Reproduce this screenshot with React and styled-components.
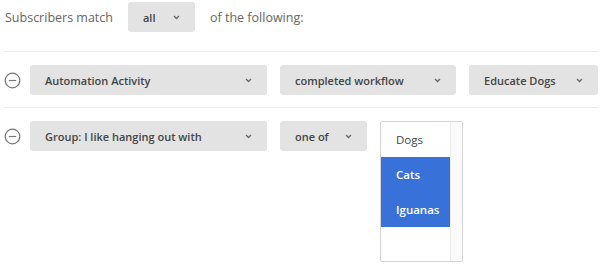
import styled, { createGlobalStyle } from 'styled-components';

const GlobalStyle = createGlobalStyle`
    body {
        margin: 0;
        background: #fff;
        font-family: "Open Sans", "Liberation Sans", sans-serif;
    }
`;

const Page = styled.div`
    width: 600px;
    height: 264px;
    overflow: hidden;
    padding: 2px 2px 0 4px;
    box-sizing: border-box;
`;

const MatchLine = styled.div`
    display: flex;
    align-items: center;
    gap: 15px;
    height: 30px;
    font-size: 12.5px;
    color: #666;
    padding-left: 1px;
    padding-bottom: 19px;
    border-bottom: 1px solid #ececec;
`;

const Select = styled.div`
    display: flex;
    align-items: center;
    justify-content: space-between;
    box-sizing: border-box;
    width: ${props => props.width}px;
    height: 30px;
    padding: 0 15px 0 15px;
    background: #e3e3e3;
    border-radius: 3px;
    font-size: 11px;
    font-weight: 600;
    color: #444;
    flex-shrink: 0;
`;

const Chevron = () => (
    <svg width="7" height="5" viewBox="0 0 7 5">
        <path d="M1 1 L3.5 3.5 L6 1" fill="none" stroke="#666" strokeWidth="1.3" />
    </svg>
);

const RuleRow = styled.div`
    display: flex;
    align-items: flex-start;
    gap: 13px;
    padding: 13px 0 12px;
    border-bottom: ${props => (props.last ? 'none' : '1px solid #ececec')};
    height: 30px;
`;

const RemoveIcon = styled.div`
    width: 17px;
    height: 30px;
    display: flex;
    align-items: center;
    margin-right: -4px;
`;

const ListBox = styled.div`
    display: flex;
    width: 83px;
    height: 141px;
    box-sizing: border-box;
    border: 1px solid #d4d4d4;
    border-radius: 2px;
    background: #fff;
    flex-shrink: 0;
`;

const Options = styled.div`
    flex: 1;
`;

const Option = styled.div`
    height: 35px;
    display: flex;
    align-items: center;
    padding-left: 15px;
    font-size: 11.5px;
    font-weight: ${props => (props.selected ? 600 : 400)};
    color: ${props => (props.selected ? '#fff' : '#444')};
    background: ${props => (props.selected ? '#3872d8' : 'transparent')};
`;

const Scrollbar = styled.div`
    width: 11px;
    border-left: 1px solid #ececec;
    background: #fafafa;
`;

const MinusCircle = () => (
    <svg width="17" height="17" viewBox="0 0 17 17">
        <circle cx="8.5" cy="8.5" r="7.3" fill="none" stroke="#777" strokeWidth="1.2" />
        <line x1="4.8" y1="8.5" x2="12.2" y2="8.5" stroke="#777" strokeWidth="1.2" />
    </svg>
);

const Dropdown = ({ width, label }) => (
    <Select width={width}>
        <span>{label}</span>
        <Chevron />
    </Select>
);

export default function App() {
    return (
        <Page>
            <GlobalStyle />
            <MatchLine>
                <span>Subscribers match</span>
                <Dropdown width={67} label="all" />
                <span>of the following:</span>
            </MatchLine>
            <RuleRow>
                <RemoveIcon><MinusCircle /></RemoveIcon>
                <Dropdown width={237} label="Automation Activity" />
                <Dropdown width={176} label="completed workflow" />
                <Dropdown width={129} label="Educate Dogs" />
            </RuleRow>
            <RuleRow last>
                <RemoveIcon><MinusCircle /></RemoveIcon>
                <Dropdown width={237} label="Group: I like hanging out with" />
                <Dropdown width={87} label="one of" />
                <ListBox>
                    <Options>
                        <Option>Dogs</Option>
                        <Option selected>Cats</Option>
                        <Option selected>Iguanas</Option>
                    </Options>
                    <Scrollbar />
                </ListBox>
            </RuleRow>
        </Page>
    );
}
